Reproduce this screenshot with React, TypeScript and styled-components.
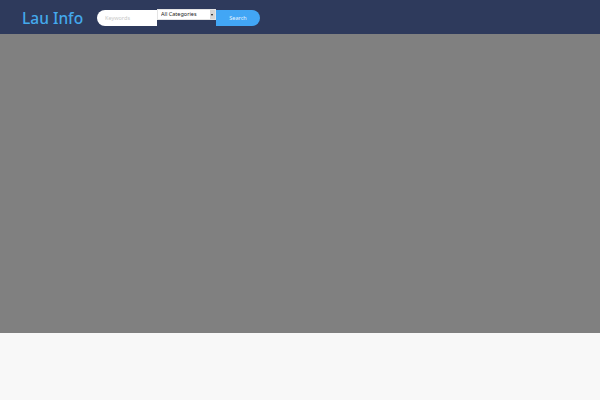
import React from 'react'
import styled, { createGlobalStyle } from 'styled-components'

const GlobalStyle = createGlobalStyle`
    html, body {
        margin: 0;
        padding: 0;
        background: #f8f8f8;
        font-family: "Noto Sans", "Open Sans", sans-serif;
    }
`;

const App: React.FC = () => {
    return (
        <>
            <GlobalStyle />
            <Header>
                <Logo>Lau Info</Logo>
                <SearchForm onSubmit={e => e.preventDefault()}>
                    <Keyword placeholder="Keywords" />
                    <SelectWrap>
                        <Category defaultValue="all">
                            <option value="all">All Categories</option>
                        </Category>
                        <Arrow />
                    </SelectWrap>
                    <SearchButton type="submit">Search</SearchButton>
                </SearchForm>
            </Header>
            <Hero />
            <Footer />
        </>
    )
}

const Header = styled.header`
    height: 34px;
    background: #2e3a5c;
    display: flex;
    align-items: center;
    padding-left: 22px;
    box-sizing: border-box;
`;

const Logo = styled.div`
    color: #44a9ec;
    font-size: 15.5px;
    font-weight: 500;
    margin-right: 14px;
    line-height: 1;
    margin-top: 3px;
    width: 61px;
    white-space: nowrap;
`;

const SearchForm = styled.form`
    display: flex;
    align-items: flex-start;
    height: 17px;
    margin: 0;
`;

const Keyword = styled.input`
    width: 60px;
    height: 16px;
    margin-top: 1px;
    box-sizing: border-box;
    border: none;
    outline: none;
    border-radius: 8px 0 0 8px;
    padding: 0 0 0 8px;
    font-family: inherit;
    font-size: 5.5px;
    background: #fff;
    &::placeholder {
        color: #c9c9c9;
    }
`;

const SelectWrap = styled.div`
    position: relative;
    width: 59px;
    height: 11px;
    font-size: 0;
`;

const Category = styled.select`
    appearance: none;
    display: block;
    width: 100%;
    height: 100%;
    box-sizing: border-box;
    font-family: inherit;
    font-size: 5.5px;
    line-height: 9px;
    padding: 0 0 0 3px;
    border: 1px solid #e4e4e4;
    border-radius: 0;
    background: #fff;
    color: #222;
    margin: 0;
    outline: none;
`;

const Arrow = styled.span`
    position: absolute;
    right: 1px;
    top: 1px;
    width: 5px;
    height: 9px;
    background: #d6d6d6;
    pointer-events: none;
    &::after {
        content: "";
        position: absolute;
        left: 1px;
        top: 4px;
        border-left: 1.5px solid transparent;
        border-right: 1.5px solid transparent;
        border-top: 2px solid #111;
    }
`;

const SearchButton = styled.button`
    width: 44px;
    height: 16px;
    margin-top: 1px;
    border: none;
    border-radius: 0 8px 8px 0;
    background: #42a6f5;
    color: #e8f4ff;
    font-family: inherit;
    font-size: 5.5px;
    padding: 0;
`;

const Hero = styled.div`
    height: 299px;
    background: #808080;
`;

const Footer = styled.div`
    height: 67px;
    background: #f8f8f8;
`;

export default App
